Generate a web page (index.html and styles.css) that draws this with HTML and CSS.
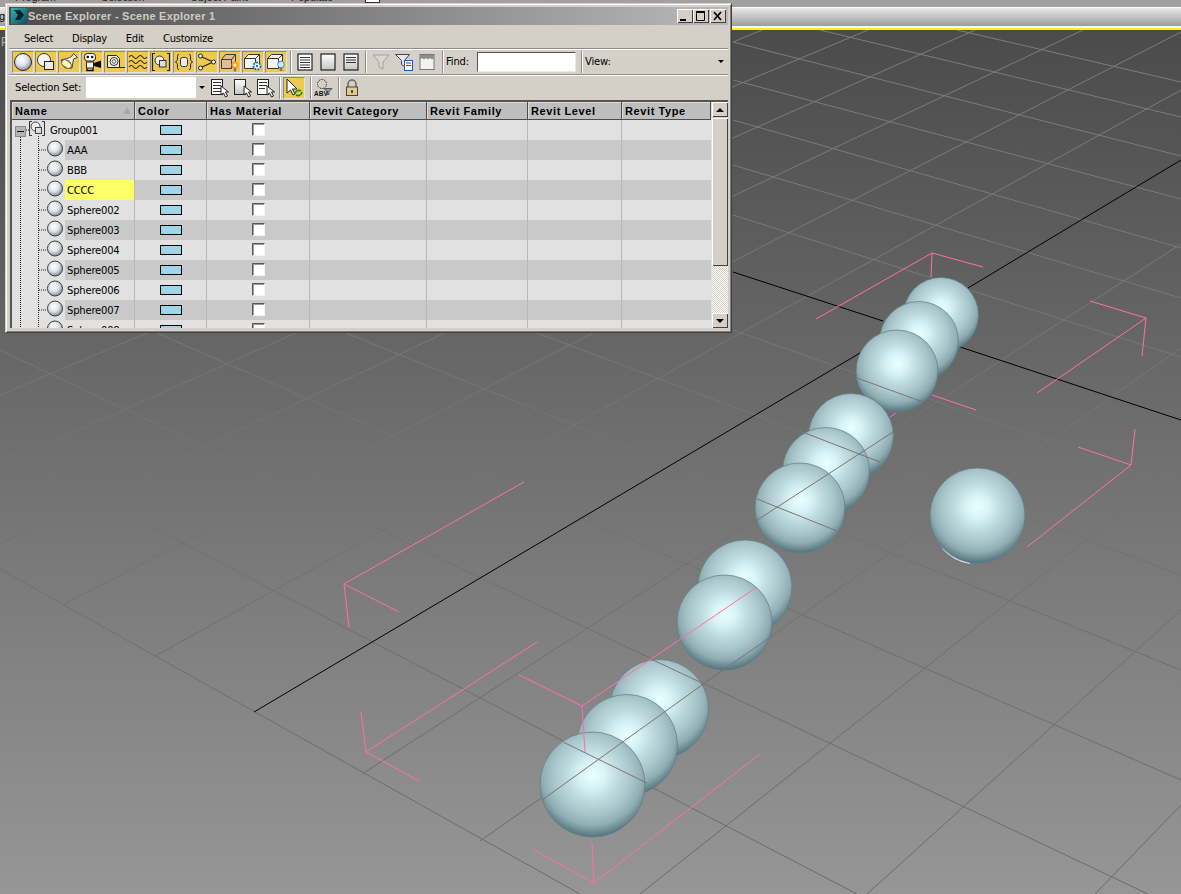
FILE: index.html
```html
<!DOCTYPE html>
<html lang="en">
<head>
<meta charset="utf-8">
<title>Scene Explorer</title>
<link rel="stylesheet" href="styles.css">
</head>
<body>
<svg class="defs" width="0" height="0" aria-hidden="true">
  <defs>
    <radialGradient id="ballg" cx=".42" cy=".36" r=".62"><stop offset="0" stop-color="#fff"/><stop offset=".55" stop-color="#dfe3ea"/><stop offset="1" stop-color="#8d93a2"/></radialGradient>
    <linearGradient id="blankg" x1="0" y1="0" x2="0" y2="1"><stop offset="0" stop-color="#fff"/><stop offset="1" stop-color="#c4c4c4"/></linearGradient>
    <radialGradient id="sphereg" cx=".5" cy=".41" r=".6"><stop offset="0" stop-color="#e8ffff"/><stop offset=".2" stop-color="#d9f4f6"/><stop offset=".42" stop-color="#bfdade"/><stop offset=".62" stop-color="#a9c6cb"/><stop offset=".8" stop-color="#8fadb3"/><stop offset="1" stop-color="#4f6d75"/></radialGradient>
    <linearGradient id="gridg" gradientUnits="userSpaceOnUse" x1="0" y1="30" x2="0" y2="894"><stop offset="0" stop-color="#7c7c7c"/><stop offset="1" stop-color="#6a6a6a"/></linearGradient>
    <symbol id="ball" viewBox="0 0 53 20"><path class="dots" d="M8.5 0V20M26.5 0V20M27 10H35"/><circle cx="43" cy="8.5" r="7.5" fill="url(#ballg)" stroke="#3c3c3c"/></symbol>
    <symbol id="doc" viewBox="0 0 20 20"><rect x="2.5" y="1.5" width="11" height="15" fill="#fff" stroke="#222"/><path d="M4 4.500h8M4 7.500h8M4 10.500h8M4 13.500h8" stroke="#333"/><path d="M12 8v9l2.500-2 2 4 2-1-2-4h3z" fill="#fff" stroke="#222"/></symbol>
    <symbol id="doc2" viewBox="0 0 20 20"><rect x="2.500" y="1.500" width="11" height="15" fill="url(#blankg)" stroke="#222"/><path d="M12 8v9l2.500-2 2 4 2-1-2-4h3z" fill="#fff" stroke="#222"/></symbol>
    <symbol id="doc3" viewBox="0 0 20 20"><rect x="2.500" y="1.500" width="11" height="15" fill="#fff" stroke="#222"/><path d="M4 4.500h8M4 7.500h8M4 10.500h6" stroke="#333"/><path d="M12 8v9l2.500-2 2 4 2-1-2-4h3z" fill="#fff" stroke="#222"/></symbol>
    <symbol id="cube" viewBox="0 0 20 20"><path d="M1.500 6.500l4-4h11v10l-4 4h-11z" fill="#f4f4f4" stroke="#333"/><path d="M1.500 6.500h11v10M12.500 6.500l4-4" fill="none" stroke="#333"/></symbol>
  </defs>
</svg>

<header class="topbar">
  <div class="tabs"><span class="tab t1">Program</span><span class="tab t2">Selection</span><span class="tab t3">Object Paint</span><span class="tab t4">Populate</span><span class="tabbox"></span></div>
  <div class="strip"><span class="stripg">g</span></div>
  <div class="stripline"></div>
  <div class="yellow"></div>
</header>

<main class="viewport">
  <span class="edgeglyph">P</span>
  <svg class="scene" viewBox="0 30 1181 864" width="1181" height="864">
    <g class="grid">
      <path d="M957 30L1181 82M820 30L1181 117M733 42L1181 156M733 80L1181 199M733 120L1181 248M733 165L1181 298M733 215L1181 357M733 330L1181 488M537 333L1181 575M346 333L1181 670M157 333L1181 780M0 350L1148 894M0 448L857 894M0 569L580 894"/>
      <path d="M762 30L733 42M0 395L868 30M0 465L975 30M0 544L1083 30M64 604L1181 32M155 656L1181 90M362 774L1181 244M480 841L1181 348M640 894L1181 465M867 894L1181 610M1095 894L1181 805"/>
    </g>
    <g class="axis">
      <path d="M733 272L883 321M948 343L1181 420M1181 160L968 288M860 353L254 712"/>
    </g>
    <g class="pink">
      <path d="M932 253L816 319M932 253L983 267M932 253L931 277"/>
      <path d="M1146 318L1090 301M1146 318L1037 393M1146 318L1142 356"/>
      <path d="M932 395L976 410M890 417L896 413"/>
      <path d="M1131 465L1078 447M1131 465L1135 429M1131 465L1027 547"/>
      <path d="M344 584L524 482M344 584L399 612M344 584L349 627"/>
      <path d="M366 752L537 642M366 752L419 781M366 752L361 712"/>
      <path d="M582 706L519 675"/>
      <path d="M594 883L534 850M594 883L760 754M594 883L592 843"/>
    </g>
    <g class="spheres">
      <circle cx="941" cy="315" r="37.500"/>
      <circle cx="919" cy="341" r="39.500"/>
      <circle cx="897" cy="371" r="41"/>
      <circle cx="851" cy="436" r="42.500"/>
      <circle cx="826" cy="471" r="43.500"/>
      <circle cx="800" cy="508" r="45"/>
      <path class="crescent" d="M943 548C950 556 958 561 970 563"/>
      <circle cx="977.500" cy="515.500" r="47.500"/>
      <circle cx="745" cy="587" r="47"/>
      <circle cx="724.500" cy="622.500" r="47.500"/>
      <circle cx="659" cy="709" r="49.500"/>
      <circle cx="627" cy="745" r="50.500"/>
      <circle cx="592.500" cy="784.500" r="52.500"/>
    </g>
    <g class="overgrid">
      <path d="M745 528L893 432M805 433L880 462M757 499L837 531M857 378L923 402M542 800L702 685M723 670L772 636M563 742L647 783M653 660L702 683"/>
    </g>
    <g class="pink">
      <path d="M582 706L757 587M582 706L585 752"/>
    </g>
  </svg>
</main>

<section class="win">
  <div class="titlebar">
    <svg class="logo" viewBox="0 0 16 16" width="16" height="16"><defs><linearGradient id="logog" x1="0" y1="0" x2="1" y2="1"><stop offset="0" stop-color="#2bb4b8"/><stop offset="1" stop-color="#0a4f5c"/></linearGradient></defs><rect width="16" height="16" fill="url(#logog)"/><path d="M3 2h6l4 5-4 5H4l3-5z" fill="#06222c"/></svg>
    <span class="titletext">Scene Explorer - Scene Explorer 1</span>
    <div class="winbtns">
      <span class="winbtn"><svg viewBox="0 0 15 14" width="15" height="14"><path d="M3 10h6v2H3z" fill="#000"/></svg></span>
      <span class="winbtn"><svg viewBox="0 0 15 14" width="15" height="14"><path d="M3.500 3.500h8v8h-8z" fill="none" stroke="#000"/><path d="M3 2h9v2H3z" fill="#000"/></svg></span>
      <span class="winbtn close"><svg viewBox="0 0 15 14" width="15" height="14"><path d="M4 3l7 8M11 3l-7 8" stroke="#000" stroke-width="1.800"/></svg></span>
    </div>
  </div>

  <nav class="menu"><span>Select</span><span>Display</span><span>Edit</span><span>Customize</span></nav>

  <div class="toolbar one">
    <span class="tb"><svg viewBox="0 0 20 20"><circle cx="10" cy="10" r="8.500" fill="url(#ballg)" stroke="#2a2a2a"/></svg></span>
    <span class="tb"><svg viewBox="0 0 20 20"><circle cx="8" cy="8" r="6.500" fill="#f6f6f6" stroke="#333"/><rect x="8.500" y="9.500" width="9" height="8" fill="#ececec" stroke="#222"/></svg></span>
    <span class="tb"><svg viewBox="0 0 20 20"><path d="M14.500 1.500l4 4-4 1.500-1.500 9C9 17 3.500 13 2 8c3-1 8-1.500 10.500-3.500z" fill="#f4f1e4" stroke="#444"/><ellipse cx="7.500" cy="12" rx="5.500" ry="3.500" transform="rotate(38 7.500 12)" fill="#fff8b8" stroke="#555"/></svg></span>
    <span class="tb"><svg viewBox="0 0 20 20"><rect x="2.500" y="1.500" width="11" height="7.500" rx="3" fill="#fff" stroke="#222"/><circle cx="5.800" cy="5" r="1.300" fill="#111"/><circle cx="10.200" cy="5" r="1.300" fill="#111"/><rect x="4.500" y="10" width="7" height="6" fill="#f4f4f4" stroke="#222"/><path d="M12 11l7-2.500v7.500l-7-2z" fill="#111"/><path d="M5 16.500v2h6v-2" fill="none" stroke="#111" stroke-width="1.500"/></svg></span>
    <span class="tb"><svg viewBox="0 0 20 20"><path d="M2.500 3.500h9l3 3v9h-12z" fill="#f6efd0" stroke="#222"/><circle cx="9" cy="9.500" r="4" fill="#f8f8f8" stroke="#333"/><circle cx="9" cy="9.500" r="1.800" fill="none" stroke="#555"/><path d="M14 15.500h6" stroke="#222"/></svg></span>
    <span class="tb"><svg viewBox="0 0 20 20"><path d="M1 5q2.250-3 4.500 0t4.500 0 4.500 0 4.500 0M1 10q2.250-3 4.500 0t4.500 0 4.500 0 4.500 0M1 15q2.250-3 4.500 0t4.500 0 4.500 0 4.500 0" fill="none" stroke="#222" stroke-width="1.100"/></svg></span>
    <span class="tb"><svg viewBox="0 0 20 20"><path d="M4 1.500H1.500v17H4M16 1.500h2.500v17H16" fill="none" stroke="#222" stroke-width="1.200"/><circle cx="8.500" cy="8.500" r="4.500" fill="#f0f0f0" stroke="#333"/><rect x="8.500" y="8.500" width="6.500" height="6.500" fill="#dedede" stroke="#333"/></svg></span>
    <span class="tb"><svg viewBox="0 0 20 20"><path d="M5 2.500C3 2.500 3.500 4 3.500 6S3 9.500 1.500 10C3 10.500 3.500 12 3.500 14S3 17.500 5 17.500M15 2.500C17 2.500 16.500 4 16.500 6S17 9.500 18.500 10C17 10.500 16.500 12 16.500 14S17 17.500 15 17.500" fill="none" stroke="#222"/><rect x="6.500" y="5.500" width="7" height="9" rx="2" fill="#ececec" stroke="#333"/></svg></span>
    <span class="tb"><svg viewBox="0 0 20 20"><path d="M4 4.500L16 10 4 15.500" fill="none" stroke="#222" stroke-width="1.200"/><circle cx="3.500" cy="4" r="2" fill="#fafafa" stroke="#222"/><circle cx="3.500" cy="16" r="2" fill="#fafafa" stroke="#222"/><circle cx="16.500" cy="10" r="2" fill="#fafafa" stroke="#222"/></svg></span>
    <span class="tb"><svg viewBox="0 0 20 20"><path d="M1.500 7.500l4-5h10v9l-4 5h-10z" fill="#e3bf90" stroke="#3c3c3c"/><path d="M1.500 7.500h10v9M11.500 7.500l4-5" fill="none" stroke="#3c3c3c"/><circle cx="15" cy="13" r="3.500" fill="#ff9d1e"/><circle cx="15" cy="13" r="1.600" fill="#fff6a0"/><rect x="13.800" y="16" width="2.400" height="3.500" fill="#777"/></svg></span>
    <span class="tb"><svg viewBox="0 0 20 20"><use href="#cube"/><circle cx="14" cy="14" r="3.500" fill="#fff" stroke="#1670d0" stroke-width="2" stroke-dasharray="2 1"/><circle cx="14" cy="14" r="1.200" fill="#1670d0"/></svg></span>
    <span class="tb"><svg viewBox="0 0 20 20"><use href="#cube"/><circle cx="15" cy="12.500" r="3.300" fill="#cfe8ff" stroke="#3a8ae0"/><rect x="13.700" y="15.500" width="2.600" height="3.500" fill="#777"/></svg></span>
    <i class="sep first"></i>
    <span class="ti"><svg viewBox="0 0 20 20"><rect x="3" y="2" width="14" height="16" fill="#fff" stroke="#222" stroke-width="1.200"/><path d="M5 5.500h10M5 8h10M5 10.500h10M5 13h10M5 15.500h10" stroke="#333"/></svg></span>
    <span class="ti"><svg viewBox="0 0 20 20"><rect x="3" y="2" width="14" height="16" fill="url(#blankg)" stroke="#222" stroke-width="1.200"/></svg></span>
    <span class="ti"><svg viewBox="0 0 20 20"><rect x="3" y="2" width="14" height="16" fill="url(#blankg)" stroke="#222" stroke-width="1.200"/><path d="M5 5.500h10M5 8h10M5 10.500h10" stroke="#333"/></svg></span>
    <i class="sep s2"></i>
    <span class="ti fun"><svg viewBox="0 0 20 20"><path d="M2 3h16l-6 7v7l-4-2v-5z" fill="#dad7d0" stroke="#a3a19b"/></svg></span>
    <span class="ti fun"><svg viewBox="0 0 20 20"><path d="M1.500 2.500h14l-5 6v6l-3-2v-4z" fill="#e8e8e8" stroke="#444"/><rect x="10.500" y="8.500" width="8" height="10" fill="#fff" stroke="#1c5fa8"/><path d="M12 11h5M12 13.500h5" stroke="#1c5fa8"/></svg></span>
    <span class="ti fun"><svg viewBox="0 0 20 20"><rect x="3" y="2.500" width="14" height="15" fill="#f2f2f2" stroke="#777"/><path d="M3 3h14v3l-2 1.500-2-1.500-2 1.500-2-1.500-2 1.500-2-1.500-2 1.500z" fill="#8c8c8c"/></svg></span>
    <i class="sep s3"></i>
    <span class="lbl find">Find:</span>
    <span class="findbox"></span>
    <i class="sep s4"></i>
    <span class="lbl view">View:</span>
    <i class="arrow viewarrow"></i>
  </div>

  <div class="toolbar two">
    <span class="lbl setlbl">Selection Set:</span>
    <span class="setbox"></span>
    <span class="setdrop"><i class="arrow"></i></span>
    <span class="ti"><svg viewBox="0 0 20 20"><use href="#doc"/></svg></span>
    <span class="ti"><svg viewBox="0 0 20 20"><use href="#doc2"/></svg></span>
    <span class="ti"><svg viewBox="0 0 20 20"><use href="#doc3"/></svg></span>
    <i class="sep s5"></i>
    <span class="tb on"><svg viewBox="0 0 20 20"><path d="M3 1v14l3.500-3 2.500 5 2-1-2.500-5H13z" fill="#fff" stroke="#222"/><path d="M11 16a4 4 0 0 1 6-3M18 14a4 4 0 0 1-6 3" fill="none" stroke="#0f8f1e" stroke-width="1.600"/></svg></span>
    <i class="sep s6"></i>
    <span class="ti nf"><svg viewBox="0 0 20 20"><circle cx="8" cy="6" r="4.500" fill="none" stroke="#222" stroke-dasharray="1.500 1"/><path d="M10 10.500h8l-3 3v3h-2v-3z" fill="#999" stroke="#555"/><text x="0" y="18" class="abv">ABV</text></svg></span>
    <i class="sep s7"></i>
    <span class="ti lock"><svg viewBox="0 0 20 20"><path d="M6 9V6a4 4 0 0 1 8 0v3" fill="none" stroke="#666" stroke-width="1.500"/><rect x="4.500" y="9" width="11" height="8.500" fill="#e6c88a" stroke="#444"/><rect x="9" y="12" width="2" height="3" fill="#5a4a2a"/></svg></span>
  </div>

  <div class="table">
    <div class="grid-wrap">
      <div class="hdr">
        <span class="hc c1">Name<i class="sort"></i></span><span class="hc c2">Color</span><span class="hc c3">Has Material</span><span class="hc c4">Revit Category</span><span class="hc c5">Revit Family</span><span class="hc c6">Revit Level</span><span class="hc c7">Revit Type</span>
      </div>
      <div class="row lt group">
        <span class="cell c1 namec"><svg class="tree" viewBox="0 0 36 20" width="36" height="20"><path class="dots" d="M8.500 17V20M26.500 16V20M14 10H17"/><rect x="3.500" y="6.500" width="10" height="10" fill="#b4b4b4" stroke="#8a8a8a"/><path d="M5 11.500h7" stroke="#111"/><path d="M20 1.500h-2.500v14H20M30 1.500h2.500v14H30" fill="none" stroke="#333"/><circle cx="23.500" cy="6.500" r="4.500" fill="#eee" stroke="#444"/><rect x="23.500" y="7.500" width="6" height="6" fill="#ddd" stroke="#444"/></svg><span class="label">Group001</span></span>
        <span class="cell c2"><i class="swatch"></i></span><span class="cell c3"><i class="check"></i></span><span class="cell c4"></span><span class="cell c5"></span><span class="cell c6"></span><span class="cell c7"></span>
      </div>
      <div class="row dk">
        <span class="cell c1 namec"><svg class="tree" width="53" height="20"><use href="#ball"/></svg><span class="label">AAA</span></span>
        <span class="cell c2"><i class="swatch"></i></span><span class="cell c3"><i class="check"></i></span><span class="cell c4"></span><span class="cell c5"></span><span class="cell c6"></span><span class="cell c7"></span>
      </div>
      <div class="row lt">
        <span class="cell c1 namec"><svg class="tree" width="53" height="20"><use href="#ball"/></svg><span class="label">BBB</span></span>
        <span class="cell c2"><i class="swatch"></i></span><span class="cell c3"><i class="check"></i></span><span class="cell c4"></span><span class="cell c5"></span><span class="cell c6"></span><span class="cell c7"></span>
      </div>
      <div class="row dk">
        <span class="cell c1 namec"><svg class="tree" width="53" height="20"><use href="#ball"/></svg><span class="label hl">CCCC</span></span>
        <span class="cell c2"><i class="swatch"></i></span><span class="cell c3"><i class="check"></i></span><span class="cell c4"></span><span class="cell c5"></span><span class="cell c6"></span><span class="cell c7"></span>
      </div>
      <div class="row lt">
        <span class="cell c1 namec"><svg class="tree" width="53" height="20"><use href="#ball"/></svg><span class="label">Sphere002</span></span>
        <span class="cell c2"><i class="swatch"></i></span><span class="cell c3"><i class="check"></i></span><span class="cell c4"></span><span class="cell c5"></span><span class="cell c6"></span><span class="cell c7"></span>
      </div>
      <div class="row dk">
        <span class="cell c1 namec"><svg class="tree" width="53" height="20"><use href="#ball"/></svg><span class="label">Sphere003</span></span>
        <span class="cell c2"><i class="swatch"></i></span><span class="cell c3"><i class="check"></i></span><span class="cell c4"></span><span class="cell c5"></span><span class="cell c6"></span><span class="cell c7"></span>
      </div>
      <div class="row lt">
        <span class="cell c1 namec"><svg class="tree" width="53" height="20"><use href="#ball"/></svg><span class="label">Sphere004</span></span>
        <span class="cell c2"><i class="swatch"></i></span><span class="cell c3"><i class="check"></i></span><span class="cell c4"></span><span class="cell c5"></span><span class="cell c6"></span><span class="cell c7"></span>
      </div>
      <div class="row dk">
        <span class="cell c1 namec"><svg class="tree" width="53" height="20"><use href="#ball"/></svg><span class="label">Sphere005</span></span>
        <span class="cell c2"><i class="swatch"></i></span><span class="cell c3"><i class="check"></i></span><span class="cell c4"></span><span class="cell c5"></span><span class="cell c6"></span><span class="cell c7"></span>
      </div>
      <div class="row lt">
        <span class="cell c1 namec"><svg class="tree" width="53" height="20"><use href="#ball"/></svg><span class="label">Sphere006</span></span>
        <span class="cell c2"><i class="swatch"></i></span><span class="cell c3"><i class="check"></i></span><span class="cell c4"></span><span class="cell c5"></span><span class="cell c6"></span><span class="cell c7"></span>
      </div>
      <div class="row dk">
        <span class="cell c1 namec"><svg class="tree" width="53" height="20"><use href="#ball"/></svg><span class="label">Sphere007</span></span>
        <span class="cell c2"><i class="swatch"></i></span><span class="cell c3"><i class="check"></i></span><span class="cell c4"></span><span class="cell c5"></span><span class="cell c6"></span><span class="cell c7"></span>
      </div>
      <div class="row lt">
        <span class="cell c1 namec"><svg class="tree" width="53" height="20"><use href="#ball"/></svg><span class="label">Sphere008</span></span>
        <span class="cell c2"><i class="swatch"></i></span><span class="cell c3"><i class="check"></i></span><span class="cell c4"></span><span class="cell c5"></span><span class="cell c6"></span><span class="cell c7"></span>
      </div>
    </div>
    <div class="scroll">
      <span class="sbtn"><i class="tri up"></i></span>
      <span class="thumb"></span>
      <span class="track"></span>
      <span class="sbtn"><i class="tri down"></i></span>
    </div>
  </div>
</section>
</body>
</html>
```

FILE: styles.css
```css
* { box-sizing: border-box; }
html, body { margin: 0; padding: 0; }
body {
  position: relative;
  width: 1181px;
  height: 894px;
  overflow: hidden;
  background: #4b4b4b;
  font-family: "DejaVu Sans", sans-serif;
  font-size: 10px;
  letter-spacing: -0.2px;
  color: #000;
}
.defs { position: absolute; }

/* application chrome behind the floating window */
.topbar { height: 30px; display: flex; flex-direction: column; }
.tabs {
  height: 7px;
  background: #a0a0a0;
  position: relative;
  display: flex;
  font-family: "Liberation Sans", sans-serif;
  font-size: 11px;
}
.tab { height: 3px; display: flex; align-items: flex-end; overflow: hidden; line-height: 12px; color: #222; }
.t1 { margin-left: 15px; width: 86px; }
.t2 { width: 89px; }
.t3 { width: 101px; }
.t4 { width: 74px; }
.tabbox { width: 15px; height: 3px; background: #fff; border: 1px solid #333; border-top: 0; }
.strip {
  height: 19px;
  background: linear-gradient(#e8e8e8, #9c9c9c);
  border-top: 1px solid #fff;
  font-family: "Liberation Sans", sans-serif;
  font-size: 11px;
  line-height: 16px;
}
.stripg { margin-left: -1px; }
.stripline { height: 2px; background: #f6f6f6; }
.yellow { height: 2px; background: #ffef00; }

.viewport {
  position: relative;
  height: 864px;
  background: linear-gradient(#4b4b4b, #969696);
}
.edgeglyph {
  position: absolute;
  left: 1px;
  top: 5px;
  font-family: "Liberation Sans", sans-serif;
  font-size: 12px;
  color: #b0b0b0;
}
.scene { display: block; }
.grid path { fill: none; stroke: url(#gridg); stroke-width: 1; }
.axis path { fill: none; stroke: #000; stroke-width: 1; }
.pink path { fill: none; stroke: #ff6fa8; stroke-width: 1; }
.spheres circle { fill: url(#sphereg); stroke: #5f7d85; stroke-width: 0.7; }
.overgrid path { fill: none; stroke: #7a7571; stroke-width: 1; }
.crescent { fill: none; stroke: #d9dcdc; stroke-width: 2; }

/* floating Scene Explorer */
.win {
  position: absolute;
  left: 5px;
  top: 3px;
  width: 727px;
  height: 330px;
  padding: 4px 3px 4px 4px;
  background: #d4d0c8;
  border-top: 1px solid #d4d0c8;
  border-left: 1px solid #d4d0c8;
  border-right: 1px solid #404040;
  border-bottom: 1px solid #404040;
  box-shadow: inset 1px 1px 0 #fff, inset -1px -1px 0 #808080;
  display: flex;
  flex-direction: column;
}
.titlebar {
  flex: none;
  height: 18px;
  margin-top: -1px;
  margin-left: -1px;
  display: flex;
  align-items: center;
  background: linear-gradient(90deg, #4c4c4c, #b9b9b9);
  padding-left: 2px;
  padding-right: 2px;
}
.logo { flex: none; }
.titletext {
  margin-left: 1px;
  font-family: "Liberation Sans", sans-serif;
  font-weight: 700;
  font-size: 11px;
  letter-spacing: 0.25px;
  color: #cfcbc3;
}
.winbtns { margin-left: auto; display: flex; }
.winbtn {
  width: 16px;
  height: 14px;
  display: block;
  background: #d4d0c8;
  box-shadow: inset 1px 1px 0 #fff, inset -1px -1px 0 #404040;
}
.winbtn.close { margin-left: 1px; }
.winbtn svg { display: block; }

.menu {
  flex: none;
  height: 23px;
  display: flex;
  align-items: center;
  gap: 19px;
  padding-left: 15px;
  padding-top: 4px;
  margin-left: -1px;
  letter-spacing: -0.3px;
}

.toolbar {
  flex: none;
  display: flex;
  align-items: center;
  margin-left: -1px;
}
.toolbar.one {
  height: 27px;
  padding-left: 3px;
  border-top: 1px solid #8f8d87;
  border-bottom: 1px solid #8f8d87;
  box-shadow: inset 0 1px 0 #fff, 0 1px 0 #fff;
}
.toolbar.two { height: 25px; }
.tb {
  flex: none;
  width: 22px;
  height: 22px;
  margin-right: 1px;
  background: #efc850;
  border-top: 1px solid #8c8a84;
  border-left: 1px solid #8c8a84;
  border-right: 1px solid #e6e2da;
  border-bottom: 1px solid #e6e2da;
}
.tb svg { display: block; width: 20px; height: 20px; }
.ti { flex: none; width: 23px; height: 20px; display: flex; justify-content: center; }
.ti svg { width: 20px; height: 20px; }
.sep {
  flex: none;
  width: 2px;
  height: 22px;
  background: linear-gradient(90deg, #8f8d87 50%, #fff 50%);
}
.sep.first { margin: 0 1px 0 2px; }
.sep.s2 { margin: 0 2px 0 3px; }
.sep.s3 { margin: 0 2px 0 4px; }
.sep.s4 { margin: 0 2px 0 5px; }
.sep.s5 { margin: 0 2px 0 3px; }
.sep.s6 { margin: 0 0 0 5px; }
.sep.s7 { margin: 0 0 0 3px; }
.lbl { flex: none; }
.find { width: 31px; }
.findbox {
  flex: none;
  width: 99px;
  height: 20px;
  background: #fff;
  border-top: 1px solid #555;
  border-left: 1px solid #555;
  border-right: 1px solid #ece9e2;
  border-bottom: 1px solid #ece9e2;
}
.view { width: 133px; }
.arrow {
  display: block;
  width: 0;
  height: 0;
  border-left: 3px solid transparent;
  border-right: 3px solid transparent;
  border-top: 3px solid #000;
}
.setlbl { width: 71px; margin-left: 6px; }
.setbox { flex: none; width: 110px; height: 21px; background: #fff; }
.setdrop { flex: none; width: 11px; height: 21px; display: flex; align-items: center; justify-content: center; background: #d4d0c8; }
.tb.on { margin-right: 0; }
.abv { font-family: "Liberation Sans", sans-serif; font-size: 6.500px; font-weight: 700; letter-spacing: 0; fill: #111; }

.table {
  flex: none;
  position: relative;
  width: 718px;
  height: 228px;
  margin-left: 0;
  display: flex;
  overflow: hidden;
  background: #e1e1e1;
  border-top: 2px solid #555;
  border-left: 2px solid #555;
}
.grid-wrap { width: 699px; flex: none; overflow: hidden; }
.hdr { display: flex; height: 18px; }
.hc {
  flex: none;
  position: relative;
  height: 18px;
  padding-left: 3px;
  line-height: 19px;
  background: #bebebe;
  font-family: "Liberation Sans", sans-serif;
  font-weight: 700;
  font-size: 11px;
  letter-spacing: 0.6px;
  border-right: 1px solid #4c4c4c;
  border-bottom: 1px solid #4c4c4c;
  box-shadow: inset 1px 1px 0 #dcdcdc;
}
.sort {
  position: absolute;
  left: 111px;
  top: 5px;
  width: 0;
  height: 0;
  border-left: 4px solid transparent;
  border-right: 4px solid transparent;
  border-bottom: 7px solid #a8a8a8;
}
.c1 { width: 123px; }
.c2 { width: 72px; }
.c3 { width: 103px; }
.c4 { width: 117px; }
.c5 { width: 101px; }
.c6 { width: 94px; }
.c7 { width: 89px; }
.row { display: flex; height: 20px; }
.row.lt { background: #e1e1e1; }
.row.dk { background: #c9c9c9; }
.cell {
  flex: none;
  height: 20px;
  display: flex;
  align-items: center;
  justify-content: center;
  border-right: 1px solid #b9b9b9;
}
.c7 { border-right: 0; }
.hc.c7 { border-right: 1px solid #4c4c4c; }
.namec { justify-content: flex-start; }
.tree { flex: none; width: 53px; height: 20px; background: #e1e1e1; display: block; }
.dots { fill: none; stroke: #222; stroke-width: 1; stroke-dasharray: 1 1; }
.label {
  flex: 1;
  height: 20px;
  line-height: 21px;
  padding-left: 2px;
}
.group .tree { width: 36px; }
.label.hl { background: #ffff66; }
.swatch {
  display: block;
  width: 22px;
  height: 10px;
  background: #9cd6e8;
  border: 1px solid #000;
}
.check {
  display: block;
  width: 13px;
  height: 13px;
  margin-top: -2px;
  background: #fff;
  border-top: 1px solid #5a5a5a;
  border-left: 1px solid #5a5a5a;
  border-right: 1px solid #f4f4f4;
  border-bottom: 1px solid #f4f4f4;
  box-shadow: inset 1px 1px 0 #9a9a9a;
}

.scroll { flex: none; width: 16px; height: 226px; display: flex; flex-direction: column; background: #d4d0c8; margin-left: 1px; }
.sbtn {
  flex: none;
  height: 15px;
  display: flex;
  align-items: center;
  justify-content: center;
  background: #d4d0c8;
  box-shadow: inset 1px 1px 0 #fff, inset -1px -1px 0 #404040;
}
.tri { width: 0; height: 0; border-left: 4px solid transparent; border-right: 4px solid transparent; }
.tri.up { border-bottom: 4px solid #000; }
.tri.down { border-top: 4px solid #000; }
.thumb {
  flex: none;
  height: 148px;
  margin-top: 1px;
  background: #d4d0c8;
  box-shadow: inset 1px 1px 0 #fff, inset -1px -1px 0 #404040;
}
.track {
  flex: 1;
  background: repeating-conic-gradient(#fff 0 25%, #d4d0c8 0 50%) 0 0 / 2px 2px;
}
```
